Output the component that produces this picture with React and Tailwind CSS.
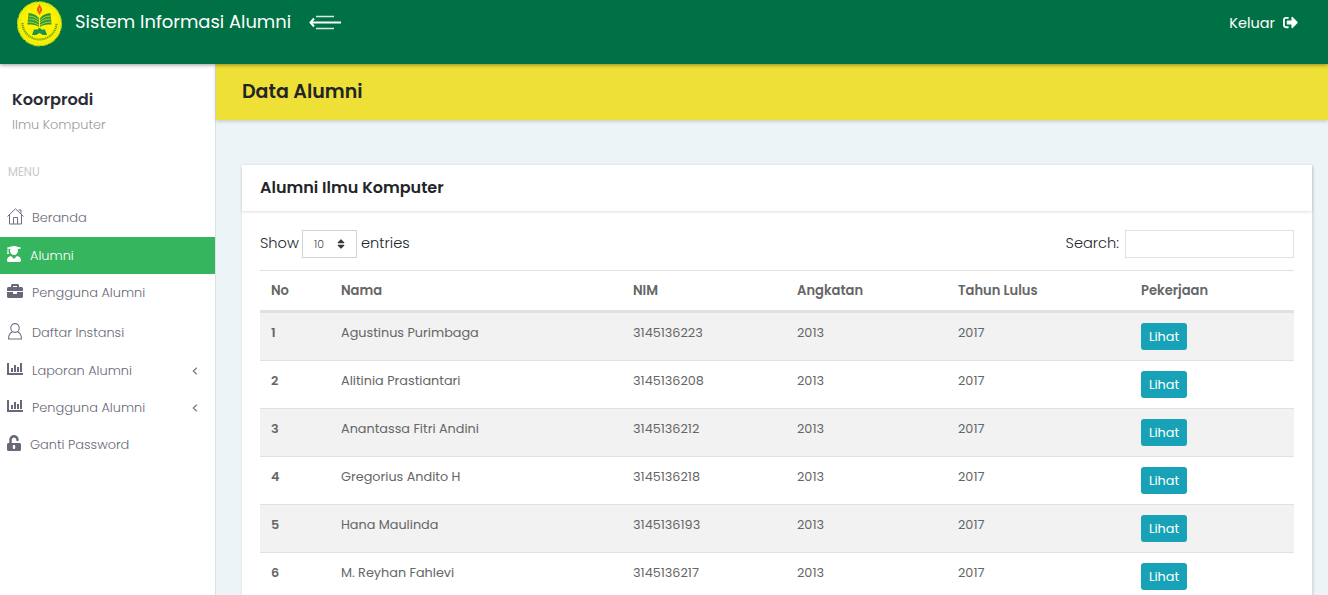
import React from "react";
import { FaUserGraduate, FaBriefcase, FaUnlockAlt, FaSignOutAlt, FaSort } from "react-icons/fa";

function Logo() {
  return (
    <svg width="46" height="46" viewBox="0 0 46 46">
      <circle cx="22.500" cy="22.800" r="22" fill="#fff200" stroke="#a9d324" strokeWidth="1.2" strokeDasharray="7 1.5" />
      <circle cx="22.500" cy="22.800" r="19.500" fill="none" stroke="#dfe300" strokeWidth="0.8" />
      <path d="M5.500 22c0 9.500 8 16.500 17 16.500s17-7 17-16.500" fill="none" stroke="#6aa81e" strokeWidth="2.2" strokeDasharray="1.3 0.7" />
      <path d="M22.500 2.500c.3 2.500 3 4 2.600 7L22.500 14l-2.600-4.500c-.4-3 2.300-4.500 2.600-7z" fill="#ee5a24" />
      <path d="M22.500 7v3.500" stroke="#ffb21f" strokeWidth="0.8" />
      <path d="M11.500 12c4 .3 8.500 2 10.500 5.500V26c-3-2-6-2.500-11.500-2.500z" fill="#2f9a3c" />
      <path d="M33.500 12c-4 .3-8.500 2-10.500 5.500V26c3-2 6-2.500 11.500-2.500z" fill="#2f9a3c" />
      <path d="M11.500 15c4 .2 7.500 1.500 10.500 4.500M11.500 18c4 .2 7.500 1 10.500 3.500M11 21c4 0 7.500 .8 11 3.300M33.500 15c-4 .2-7.500 1.500-10.500 4.500M33.500 18c-4 .2-7.500 1-10.500 3.500M34 21c-4 0-7.500 .8-11 3.300" fill="none" stroke="#e5e91c" strokeWidth="0.7" />
      <path d="M22.500 17v10" stroke="#fff200" strokeWidth="1" />
      <path d="M22 27h1l1.500 1.500h3.500l2 5.500h-4l-3.500-2-3.500 2h-4l2-5.500h3.500z" fill="#17954c" />
    </svg>
  );
}

function MenuArrow() {
  return (
    <svg width="33" height="15" viewBox="0 0 33 15" fill="none" stroke="#fff">
      <path d="M7 1.500h18M7 13.500h18" strokeWidth="1.600" opacity="0.85" />
      <path d="M1.500 7.500H32" strokeWidth="2" />
      <path d="M5 3.500L1.500 7.500l3.500 4" strokeWidth="2" />
    </svg>
  );
}

function HomeIcon() {
  return (
    <svg width="17" height="17" viewBox="0 0 17 17" fill="none" stroke="#6f6f80" strokeWidth="1" className="shrink-0">
      <path d="M.5 8.500L8.500 .8l8 7.700M2.500 6.800v9.200h12V6.800M6.500 16V9.500h4V16M11.500 2h2.500v3.800" />
    </svg>
  );
}

function PersonIcon() {
  return (
    <svg width="16" height="17" viewBox="0 0 16 17" fill="none" stroke="#6f6f80" strokeWidth="1.100">
      <ellipse cx="8" cy="5" rx="4.200" ry="4.400" />
      <path d="M5.600 8.800C3 9.800 1.600 11.700 1.500 16h13c-.1-4.300-1.500-6.200-4.100-7.200" />
    </svg>
  );
}

function ChartIcon() {
  return (
    <svg width="16" height="12" viewBox="0 0 16 12" fill="#686878">
      <path d="M0 0h2v10H16v2H0zM4 5h2v4H4zM7 2h2v7H7zM10 4h2v5h-2zM13 0h2v9h-2z" />
    </svg>
  );
}

const menu = [
  { label: "Beranda", icon: <HomeIcon />, row: "h-10", iconBox: "pb-px", text: "ml-[9px] pt-px" },
  { label: "Alumni", icon: <FaUserGraduate size={16} />, row: "h-[37px] bg-[#35b55d] text-white", iconBox: "pb-[3px] -ml-px mr-px", text: "ml-[7px]" },
  { label: "Pengguna Alumni", icon: <FaBriefcase size={16} color="#686878" />, row: "h-[37px]", iconBox: "pb-[3px]", text: "ml-[9px]" },
  { label: "Daftar Instansi", icon: <PersonIcon />, row: "h-[41px]", iconBox: "", text: "ml-[9px] pt-[2px]" },
  { label: "Laporan Alumni", icon: <ChartIcon />, row: "h-9", iconBox: "pb-[2px]", text: "ml-[9px] pt-[2px]", sub: true },
  { label: "Pengguna Alumni", icon: <ChartIcon />, row: "h-[38px]", iconBox: "pb-[2px]", text: "ml-[9px] pt-[2px]", sub: true },
  { label: "Ganti Password", icon: <FaUnlockAlt size={16} color="#686878" />, row: "h-9", iconBox: "pb-[2px] -ml-px mr-px", text: "ml-[7px] pt-[2px]" },
];

const rows = [
  ["Agustinus Purimbaga", "3145136223"],
  ["Alitinia Prastiantari", "3145136208"],
  ["Anantassa Fitri Andini", "3145136212"],
  ["Gregorius Andito H", "3145136218"],
  ["Hana Maulinda", "3145136193"],
  ["M. Reyhan Fahlevi", "3145136217"],
];

const cols = "grid grid-cols-[70px_292px_164px_161px_183px_1fr] pl-[11px]";

export default function App() {
  return (
    <div className="flex h-[595px] w-[1328px] flex-col overflow-hidden bg-[#ecf4f8] font-['Poppins','Inter',sans-serif] text-[#212529]">
      <header className="relative z-20 flex h-16 shrink-0 items-start bg-[#007045] text-white shadow-[0_1px_4px_rgba(0,0,0,0.4)]">
        <div className="ml-[17px] mt-px"><Logo /></div>
        <span className="ml-3 mt-2 w-[217px] whitespace-nowrap text-[17.9px] leading-7">Sistem Informasi Alumni</span>
        <div className="ml-[17px] mt-[15px]"><MenuArrow /></div>
        <div className="ml-auto mr-[30px] mt-3 flex items-center gap-2 text-[14.5px] leading-[22px]">
          <span>Keluar</span>
          <FaSignOutAlt size={15} className="-mt-px" />
        </div>
      </header>
      <div className="flex min-h-0 flex-1">
        <aside className="w-[216px] shrink-0 border-r border-[#d9e1e6] bg-white text-[12.9px] text-[#686878]">
          <div className="ml-3 mt-6 h-[22px] text-[16.2px] font-semibold leading-[23px] text-[#2b2b35]">Koorprodi</div>
          <div className="ml-3 mt-1 h-[21px] font-light leading-[22px] text-[#9b9b9b]">Ilmu Komputer</div>
          <div className="ml-2 mt-[26px] h-[22px] text-[11.5px] leading-[22px] text-[#c8c8c8]">MENU</div>
          <nav className="mt-[14px]">
            {menu.map((m, i) => (
              <div key={i} className={"flex items-center pl-[7px] " + m.row}>
                <span className={"flex w-4 shrink-0 justify-center " + m.iconBox}>{m.icon}</span>
                <span className={"font-light " + m.text}>{m.label}</span>
                {m.sub && (
                  <svg className="ml-auto mr-[17px] mt-px" width="6" height="8" viewBox="0 0 6 8" fill="none" stroke="#777786" strokeWidth="1.200">
                    <path d="M4.800 .7L1.300 4l3.500 3.300" />
                  </svg>
                )}
              </div>
            ))}
          </nav>
        </aside>
        <main className="min-w-0 flex-1">
          <div className="h-14 bg-[#eee036] pl-[26px] pt-[14px] text-[19px] font-semibold leading-7 shadow-[0_1px_4px_rgba(0,0,0,0.2)]">Data Alumni</div>
          <section className="ml-[26px] mt-[45px] h-[440px] w-[1070px] bg-white shadow-[1px_1px_3px_rgba(0,0,0,0.15)]">
            <div className="h-[46px] pl-[18px] pt-[11px] text-[16px] font-semibold leading-[23px] shadow-[0_1px_3px_rgba(0,0,0,0.13)]">Alumni Ilmu Komputer</div>
            <div className="px-[18px]">
              <div className="flex h-[59px] items-start pt-[19px] text-[14.6px] font-light leading-[26px]">
                <span className="w-[42px]">Show</span>
                <div className="flex h-7 w-[55px] items-center justify-between border border-[#ced4da] pl-[11px] pr-[9px] text-[11px] text-[#495057]">
                  <span>10</span>
                  <FaSort size={12} color="#343a40" />
                </div>
                <span className="ml-1">entries</span>
                <span className="ml-auto">Search:</span>
                <input className="ml-[6px] h-7 w-[169px] border border-[#dee2e6] bg-white outline-none" />
              </div>
              <div className={cols + " h-10 border-t border-[#dee2e6] text-[13.1px] font-semibold leading-[39px] text-[#666]"}>
                {["No", "Nama", "NIM", "Angkatan", "Tahun Lulus", "Pekerjaan"].map((h) => <span key={h}>{h}</span>)}
              </div>
              <div className="h-[2px] bg-[#dee2e6]" />
              {rows.map((r, i) => (
                <div key={r[0]} className={cols + " h-12 border-t border-[#dee2e6] pt-[10px] text-[12.8px] leading-5 text-[#666] " + (i % 2 ? "bg-white" : "bg-[#f2f2f2]")}>
                  <span className="font-semibold">{i + 1}</span>
                  <span>{r[0]}</span>
                  <span>{r[1]}</span>
                  <span>2013</span>
                  <span>2017</span>
                  <button className="flex h-[27px] w-[46px] items-center justify-center rounded-[3px] bg-[#17a2b8] text-[12.8px] text-white">Lihat</button>
                </div>
              ))}
            </div>
          </section>
        </main>
      </div>
    </div>
  );
}
